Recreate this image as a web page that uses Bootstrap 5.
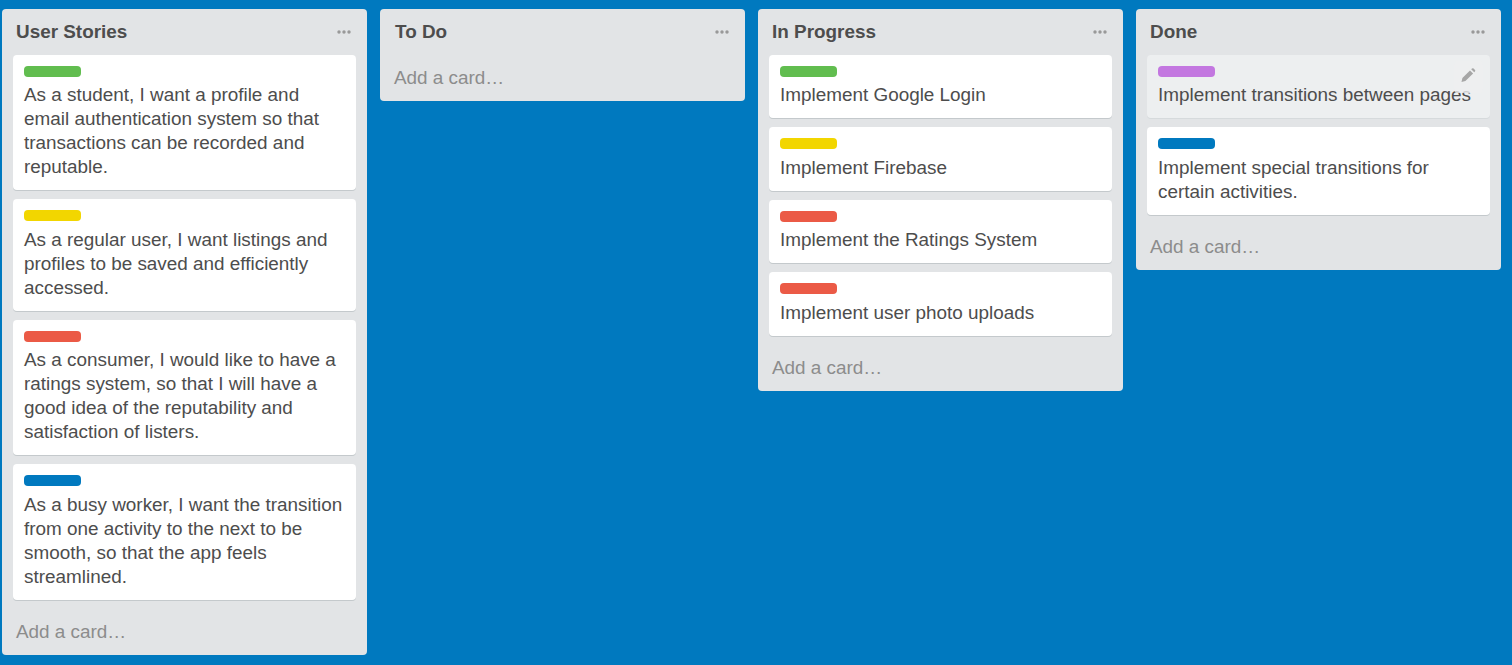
<!DOCTYPE html>
<html lang="en">
<head>
<meta charset="utf-8">
<meta name="viewport" content="width=device-width, initial-scale=1">
<title>Board</title>
<link href="https://cdn.jsdelivr.net/npm/bootstrap@5.3.0/dist/css/bootstrap.min.css" rel="stylesheet">
<style>
body{background:#0079bf;color:#4d4d4d;font-family:"Liberation Sans",Arial,sans-serif;font-size:18.9px;line-height:24px;height:665px;overflow:hidden}
.board{gap:13px;padding:9px 0 0 2px}
.board-list{width:365px;background:#e2e4e6;border-radius:4px;padding:0 11px}
.list-head{height:46px;padding:0 5px 0 3px}
.list-head h2{font-size:18.9px;font-weight:700;line-height:24px;margin:0;padding-top:11px}
.list-head svg{width:14px;height:4px;margin-top:21px;fill:#999}
.list-head.inset h2{padding-left:1px}
.stack{gap:8.95px}
.story{background:#fff;border-radius:4px;border:0;padding:11px 10px 11.02px 11px;box-shadow:0 1px 0 #c4c9cc;color:#4d4d4d}
.story p{margin:0}
.tag{width:57px;height:11px;border-radius:4px;margin-bottom:6.45px}
.green{background:#61bd4f}.yellow{background:#f2d600}.red{background:#eb5a46}.blue{background:#0079bf}.purple{background:#c377e0}
.hovered{background:#edeff0;box-shadow:0 1px 0 #d6dadc}
.edit{top:6px;right:7px;width:29px;height:32px;padding:7px 0 0 7px;border-radius:4px;background:rgba(237,239,240,.8)}
.add{color:#8c8c8c;padding:20.2px 3px 10.8px;text-decoration:none}
.add:hover{color:#4d4d4d}
.add.solo{padding:11px 3px 11px}
</style>
</head>
<body>
<main class="board d-flex align-items-start">
  <section class="board-list flex-shrink-0">
    <header class="list-head d-flex justify-content-between align-items-start"><h2>User Stories</h2><svg viewBox="0 0 14 4"><circle cx="2" cy="2" r="1.7"/><circle cx="7" cy="2" r="1.7"/><circle cx="12" cy="2" r="1.7"/></svg></header>
    <div class="stack d-flex flex-column">
      <article class="card story"><div class="tag green"></div><p>As a student, I want a profile and email authentication system so that transactions can be recorded and reputable.</p></article>
      <article class="card story"><div class="tag yellow"></div><p>As a regular user, I want listings and profiles to be saved and efficiently accessed.</p></article>
      <article class="card story"><div class="tag red"></div><p>As a consumer, I would like to have a ratings system, so that I will have a good idea of the reputability and satisfaction of listers.</p></article>
      <article class="card story"><div class="tag blue"></div><p>As a busy worker, I want the transition from one activity to the next to be smooth, so that the app feels streamlined.</p></article>
    </div>
    <a class="add d-block">Add a card…</a>
  </section>
  <section class="board-list flex-shrink-0">
    <header class="list-head inset d-flex justify-content-between align-items-start"><h2>To Do</h2><svg viewBox="0 0 14 4"><circle cx="2" cy="2" r="1.7"/><circle cx="7" cy="2" r="1.7"/><circle cx="12" cy="2" r="1.7"/></svg></header>
    <a class="add solo d-block">Add a card…</a>
  </section>
  <section class="board-list flex-shrink-0">
    <header class="list-head d-flex justify-content-between align-items-start"><h2>In Progress</h2><svg viewBox="0 0 14 4"><circle cx="2" cy="2" r="1.7"/><circle cx="7" cy="2" r="1.7"/><circle cx="12" cy="2" r="1.7"/></svg></header>
    <div class="stack d-flex flex-column">
      <article class="card story"><div class="tag green"></div><p>Implement Google Login</p></article>
      <article class="card story"><div class="tag yellow"></div><p>Implement Firebase</p></article>
      <article class="card story"><div class="tag red"></div><p>Implement the Ratings System</p></article>
      <article class="card story"><div class="tag red"></div><p>Implement user photo uploads</p></article>
    </div>
    <a class="add d-block">Add a card…</a>
  </section>
  <section class="board-list flex-shrink-0">
    <header class="list-head d-flex justify-content-between align-items-start"><h2>Done</h2><svg viewBox="0 0 14 4"><circle cx="2" cy="2" r="1.7"/><circle cx="7" cy="2" r="1.7"/><circle cx="12" cy="2" r="1.7"/></svg></header>
    <div class="stack d-flex flex-column">
      <article class="card story hovered position-relative"><div class="tag purple"></div><p>Implement transitions between pages</p>
        <span class="edit position-absolute d-flex align-items-start"><svg width="15" height="15" viewBox="0 0 15 15" fill="#a6a6a6"><path d="M.5 14 1.4 10.1 9 2.4 12.1 5.5 4.4 13.1ZM10.2 1.3 11 .6Q11.8-.1 12.6.5L14 1.9Q14.6 2.6 13.9 3.4L13.2 4.3Z"/></svg></span></article>
      <article class="card story"><div class="tag blue"></div><p>Implement special transitions for certain activities.</p></article>
    </div>
    <a class="add d-block">Add a card…</a>
  </section>
</main>
<script src="https://cdn.jsdelivr.net/npm/bootstrap@5.3.0/dist/js/bootstrap.bundle.min.js"></script>
</body>
</html>
